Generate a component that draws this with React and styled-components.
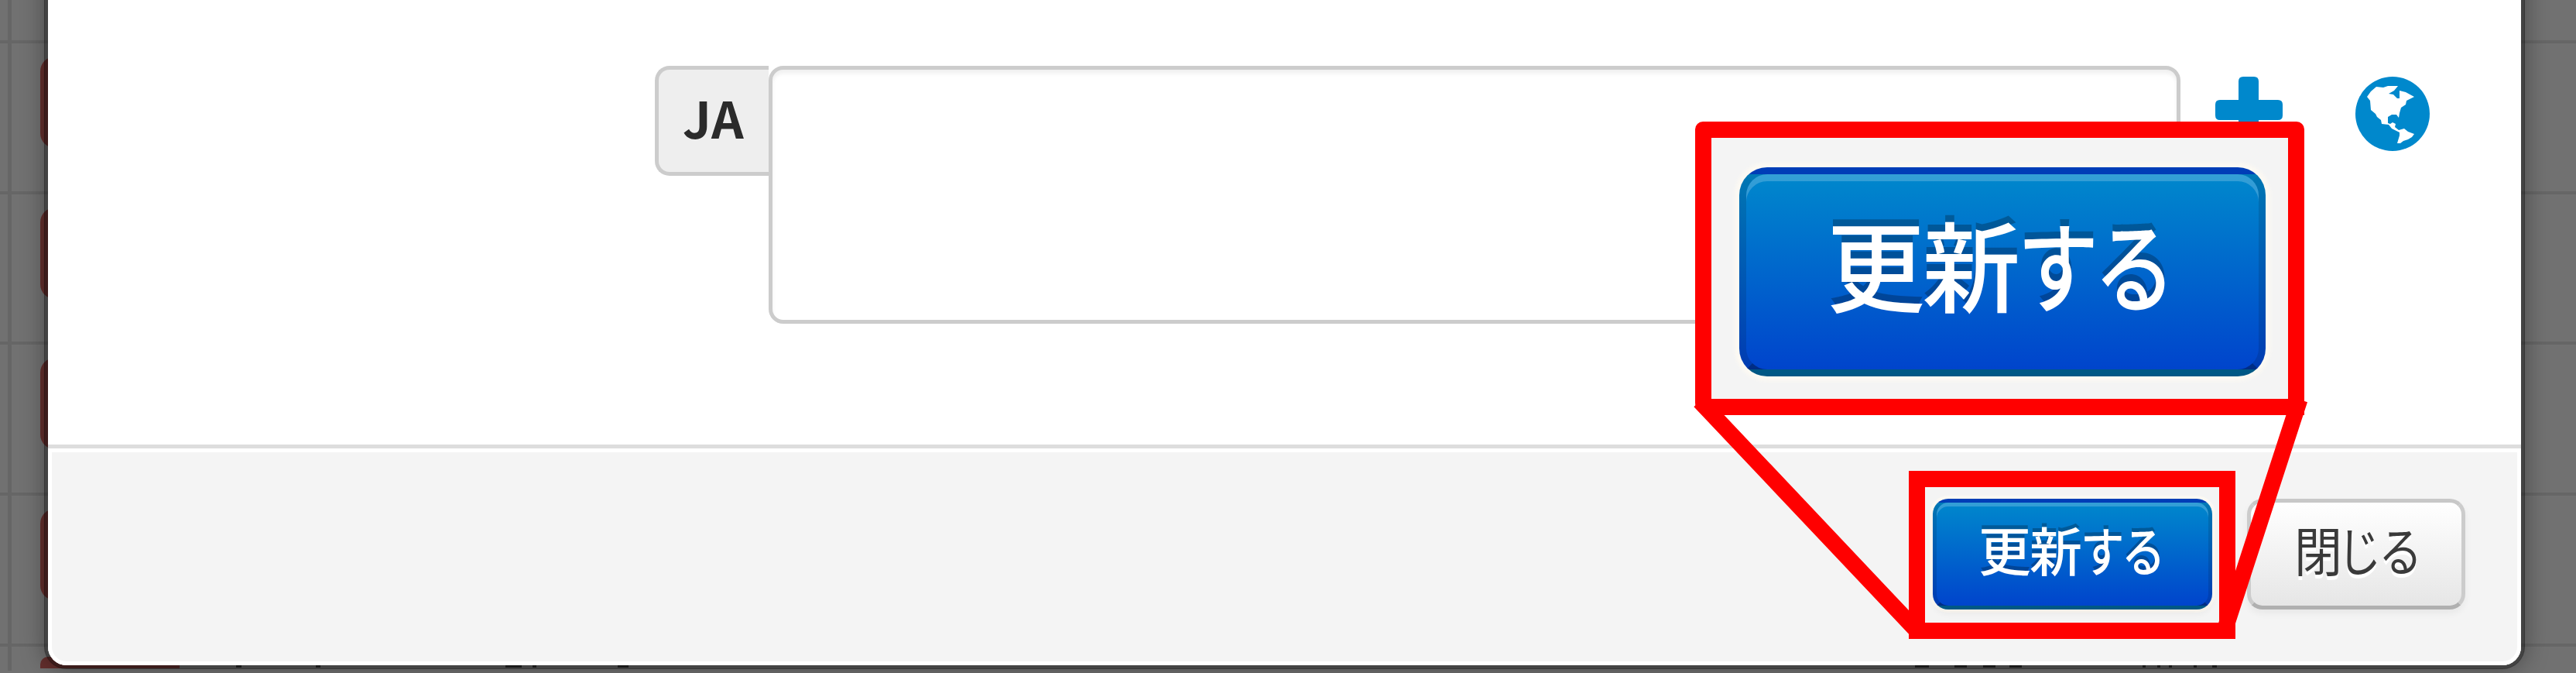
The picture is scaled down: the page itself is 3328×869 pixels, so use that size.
import React from "react";
import styled, { createGlobalStyle } from "styled-components";

const rows = [1, 2, 3, 4];

// tops of the last row's text that show under the modal: [gap, width]
const marks = [
  [73, 7],
  [96, 6],
  [239, 21],
  [14, 5],
  [105, 14],
  [1662, 18],
  [33, 16],
  [21, 16],
  [18, 16],
  [156, 4],
  [15, 4],
  [11, 4],
  [28, 4],
  [20, 6],
];

const Kana = ({ children }) => (
  <>
    {[...children].map((c) => (
      <KanaGlyph key={c}>{c}</KanaGlyph>
    ))}
  </>
);

const App = () => {
  return (
    <Page>
      <GlobalStyle />
      <Table>
        <TopRow />
        {rows.map((row) => (
          <Row key={row}>
            <DeleteButton />
          </Row>
        ))}
        <LastRow>
          <DeleteButton $wide />
          {marks.map(([gap, width], i) => (
            <Mark key={i} $gap={gap} $width={width} />
          ))}
        </LastRow>
      </Table>
      <Modal>
        <ModalBody>
          <Language>JA</Language>
          <TextArea />
          <IconLink>
            <svg width="87" height="87" viewBox="0 0 87 87" fill="#0088cc">
              <path d="M36 0h14q6 0 6 6v24h25q6 0 6 6v14q0 6-6 6H56v24q0 6-6 6H36q-6 0-6-6V56H6q-6 0-6-6V36q0-6 6-6h24V6q0-6 6-6z" />
            </svg>
          </IconLink>
          <IconLink $globe>
            <svg width="96" height="96" viewBox="0 0 96 96">
              <circle cx="48" cy="48" r="48" fill="#0088cc" />
              <path
                fill="#fff"
                d="M15 26L20 19L27 13L36 14L42 12L55 12L50 18L43 22L49 23L54 28L57 28L57 18L65 20L76 26L66 31L65 36L59 40L57 47L56 53L53 49L47 49L42 52L42 60L45 61L48 59L52 61L51 65L56 69L63 67L68 71L76 74L73 78L68 81L62 83L58 86L54 86L57 76L57 72L47 67L43 62L34 61L33 56L28 52L26 48L20 43L19 31Z"
              />
            </svg>
          </IconLink>
        </ModalBody>
        <ModalFooter>
          <Button $primary>
            更新<Kana>する</Kana>
          </Button>
          <Button>
            <NarrowKanji>閉</NarrowKanji>
            <Kana>じる</Kana>
          </Button>
        </ModalFooter>
      </Modal>
      <Callout>
        <LargeButton $primary>
          更新<Kana>する</Kana>
        </LargeButton>
      </Callout>
      <Highlight />
      <Connector width="3328" height="869">
        <path d="M2196 518L2477 815M2971 516L2876 808" />
      </Connector>
    </Page>
  );
};

const GlobalStyle = createGlobalStyle`
  * {
    box-sizing: border-box;
  }
  body {
    margin: 0;
  }
`;

const Page = styled.div`
  position: relative;
  width: 3328px;
  height: 869px;
  overflow: hidden;
  background: #717171;
  font-family: "Noto Sans CJK JP", sans-serif;
`;

const Table = styled.div`
  border-left: 5px solid #666;
  margin-left: 10px;
`;

const TopRow = styled.div`
  height: 52px;
`;

const Row = styled.div`
  height: 194.7px;
  border-top: 4px solid #666;
  margin-left: -15px;
  padding: 17px 0 0 52px;
`;

const LastRow = styled(Row)`
  display: flex;
  align-items: flex-end;
  height: 35px;
  padding-top: 16px;
`;

const DeleteButton = styled.div`
  flex: none;
  width: ${(props) => (props.$wide ? "180px" : "80px")};
  height: ${(props) => (props.$wide ? "15px" : "118px")};
  margin-bottom: ${(props) => (props.$wide ? "3px" : "0")};
  border-radius: ${(props) => (props.$wide ? "10px 10px 0 0" : "19px")};
  background: #642f2d;
`;

const Mark = styled.div`
  flex: none;
  width: ${(props) => props.$width}px;
  height: 5px;
  margin: 0 0 4px ${(props) => props.$gap}px;
  background: #2a2a2a;
`;

const Modal = styled.div`
  position: absolute;
  top: -40px;
  left: 57px;
  width: 3205px;
  height: 904px;
  border: 5px solid rgba(0, 0, 0, 0.4);
  border-radius: 0 0 29px 29px;
  background: #fff;
  background-clip: padding-box;
  box-shadow: 0 0 30px rgba(0, 0, 0, 0.35);
`;

const ModalBody = styled.div`
  display: flex;
  align-items: flex-start;
  height: 609px;
  padding: 120px 0 0 784px;
`;

const Language = styled.div`
  width: 147px;
  height: 142px;
  border: 5px solid #ccc;
  border-right: 0;
  border-radius: 19px 0 0 19px;
  background: #eee;
  color: #2b2b2b;
  font-size: 65px;
  font-weight: bold;
  line-height: 122px;
  padding-left: 31px;
`;

const TextArea = styled.div`
  width: 1824px;
  height: 333px;
  border: 5px solid #ccc;
  border-radius: 19px;
  box-shadow: inset 0 5px 5px rgba(0, 0, 0, 0.06);
`;

const IconLink = styled.a`
  margin: 14px 0 0 ${(props) => (props.$globe ? "94px" : "45px")};
  svg {
    display: block;
  }
`;

const ModalFooter = styled.div`
  display: flex;
  justify-content: flex-end;
  gap: 45px;
  height: 285px;
  padding: 65px 72px 0 0;
  border-top: 5px solid #ddd;
  border-radius: 0 0 24px 24px;
  background: #f4f4f4;
  box-shadow: inset 0 0 0 5px #fff;
`;

const Button = styled.div`
  width: ${(props) => (props.$primary ? "361px" : "282px")};
  height: 143px;
  padding-left: ${(props) => (props.$primary ? "54px" : "56px")};
  border: 5px solid;
  border-color: ${(props) =>
    props.$primary
      ? "rgba(0, 0, 0, 0.1) rgba(0, 0, 0, 0.12) rgba(0, 0, 0, 0.35)"
      : "#c8c8c8 #ccc #b0b0b0"};
  border-radius: 20px;
  background: ${(props) =>
    props.$primary
      ? "linear-gradient(#0088cc, #0044cc)"
      : "linear-gradient(#fff, #e6e6e6)"};
  box-shadow: inset 0 5px 0 rgba(255, 255, 255, 0.2),
    0 5px 10px rgba(0, 0, 0, 0.05)
    ${(props) => props.$primary && ", 0 0 0 4px #fcf9f3"};
  color: ${(props) => (props.$primary ? "#fff" : "#3a3a3a")};
  text-shadow: ${(props) =>
    props.$primary ? "0 -0.07em 0 rgba(0, 0, 0, 0.25)" : "0 5px 0 #fff"};
  font-size: 68px;
  font-weight: ${(props) => (props.$primary ? 500 : 400)};
  letter-spacing: -0.03em;
  line-height: 120px;
  white-space: nowrap;
`;

const LargeButton = styled(Button)`
  width: 680px;
  height: 270px;
  padding-left: 104px;
  border-width: 9px;
  border-radius: 36px;
  box-shadow: inset 0 9px 0 rgba(255, 255, 255, 0.2), 0 0 4px 6px #fcf9f3;
  font-size: 127px;
  line-height: 228px;
`;

const KanaGlyph = styled.span`
  display: inline-block;
  width: 0.78em;
  letter-spacing: 0;
  transform: scaleX(0.83);
  transform-origin: left;
`;

const NarrowKanji = styled.span`
  display: inline-block;
  width: 0.83em;
  letter-spacing: 0;
  transform: scaleX(0.91);
  transform-origin: left;
`;

const Callout = styled.div`
  position: absolute;
  left: 2190px;
  top: 157px;
  width: 787px;
  height: 379px;
  padding: 38px 0 0 36px;
  border: 21px solid #f00;
  border-radius: 10px 10px 0 16px;
  background: #f4f4f4;
`;

const Highlight = styled.div`
  position: absolute;
  left: 2466px;
  top: 608px;
  width: 422px;
  height: 217px;
  border: 21px solid #f00;
`;

const Connector = styled.svg`
  position: absolute;
  top: 0;
  left: 0;
  fill: none;
  stroke: #f00;
  stroke-width: 21px;
`;

export default App;
